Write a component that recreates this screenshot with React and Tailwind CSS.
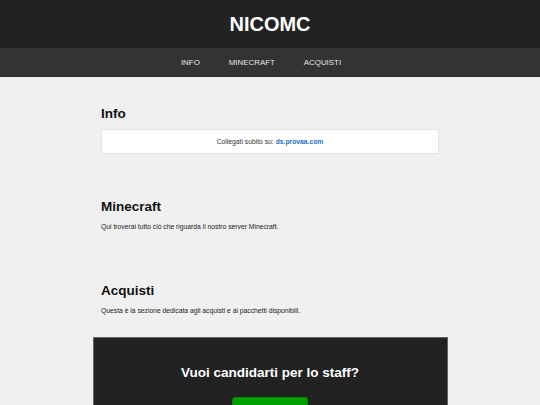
export default function App() {
  return (
    <div className="min-h-[405px] bg-[#f0f0f0] font-['Liberation_Sans',Arial,sans-serif] text-[#111]">
      <header className="h-[48px] bg-[#222222] flex items-center justify-center">
        <h1 className="text-[20px] leading-none font-bold text-white">NICOMC</h1>
      </header>
      <nav className="h-[29px] bg-[#333333] flex items-center justify-center gap-[29px] pr-[18px] text-[7.9px] font-normal text-[#e6e6e6]">
        <span>INFO</span>
        <span>MINECRAFT</span>
        <span>ACQUISTI</span>
      </nav>
      <main className="w-[338px] mx-auto pt-[29px]">
        <section>
          <h2 className="text-[13.5px] leading-[16px] font-bold">Info</h2>
          <div className="mt-[7px] h-[25px] bg-white border border-[#e4e4e4] rounded-[2px] flex items-center justify-center text-[6.75px] leading-[8px] text-[#333]">
            <span>
              Collegati subito su: <span className="font-bold text-[#1a6fc9]">ds.provaa.com</span>
            </span>
          </div>
        </section>
        <section className="mt-[45px]">
          <h2 className="text-[13.5px] leading-[16px] font-bold">Minecraft</h2>
          <p className="mt-[8px] text-[6.75px] leading-[8px] text-[#222]">
            Qui troverai tutto ciò che riguarda il nostro server Minecraft.
          </p>
        </section>
        <section className="mt-[52px]">
          <h2 className="text-[13.5px] leading-[16px] font-bold">Acquisti</h2>
          <p className="mt-[8px] text-[6.75px] leading-[8px] text-[#222]">
            Questa è la sezione dedicata agli acquisti e ai pacchetti disponibili.
          </p>
        </section>
      </main>
      <div className="w-[355px] mx-auto mt-[22px] bg-[#222222] border-t border-l border-r border-[#666] pt-[27px] pb-[20px] flex flex-col items-center">
        <h2 className="text-[13.5px] leading-[16px] font-bold text-white">Vuoi candidarti per lo staff?</h2>
        <div className="mt-[16px] w-[76px] h-[24px] bg-[#00a000] border border-[#008a00] rounded-[3px]"></div>
      </div>
    </div>
  );
}
